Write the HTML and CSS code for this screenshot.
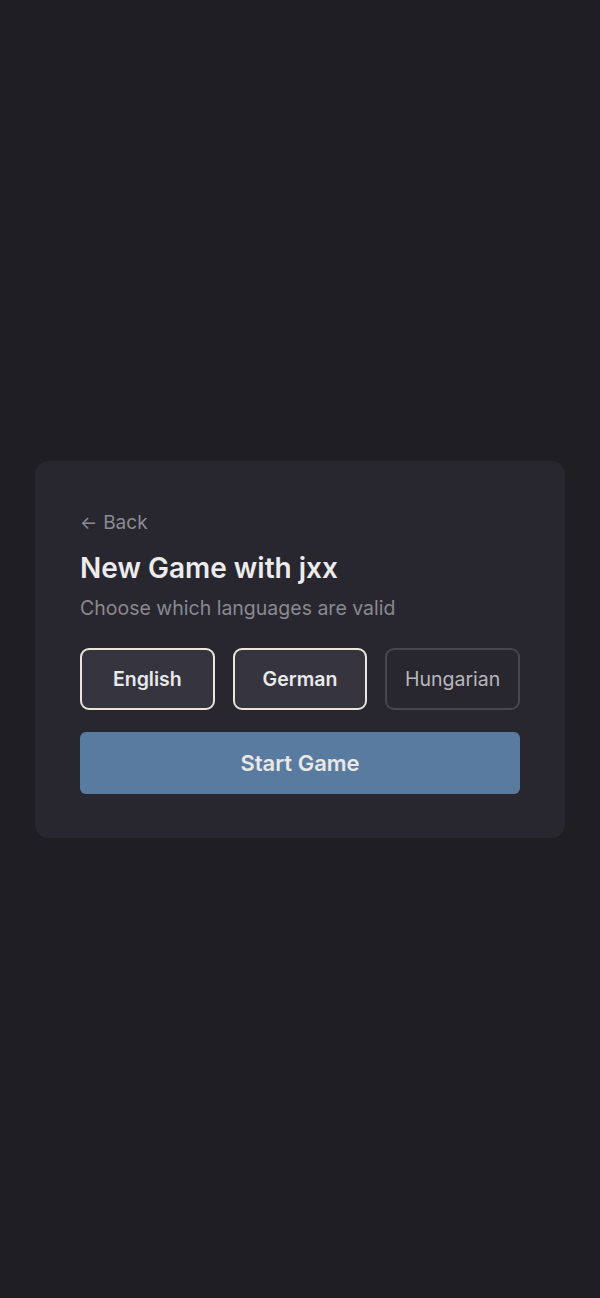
FILE: index.html
```html
<!DOCTYPE html>
<html>
<head>
<meta charset="utf-8">
<link rel="stylesheet" href="styles.css">
</head>
<body>
<div class="page">
  <div class="card">
    <a class="back"><span class="arrow">←</span> Back</a>
    <h1 class="title">New Game with jxx</h1>
    <p class="subtitle">Choose which languages are valid</p>
    <div class="langs">
      <button class="lang selected">English</button>
      <button class="lang selected">German</button>
      <button class="lang">Hungarian</button>
    </div>
    <button class="start">Start Game</button>
  </div>
</div>
</body>
</html>
```
FILE: styles.css
```css
html, body {
  margin: 0;
  padding: 0;
  background: #1f1e23;
  font-family: Inter, "Noto Sans", sans-serif;
}
.page {
  min-height: 1298px;
  display: flex;
  align-items: center;
  justify-content: center;
}
.card {
  width: 530px;
  box-sizing: border-box;
  background: #28272f;
  border-radius: 14px;
  padding: 49px 45px 44px;
  display: flex;
  flex-direction: column;
}
.back {
  color: #8c8b92;
  font-size: 19px;
  line-height: 26px;
  display: flex;
  align-items: center;
  gap: 6px;
}
.arrow {
  font-size: 18px;
}
.title {
  margin: 14px 0 0;
  color: #ececec;
  font-size: 28px;
  line-height: 36px;
  font-weight: 600;
}
.subtitle {
  margin: 9px 0 0;
  color: #8a8990;
  font-size: 19.5px;
  line-height: 26px;
}
.langs {
  margin-top: 27px;
  display: grid;
  grid-template-columns: 1fr 1fr 1fr;
  gap: 18px;
}
.lang {
  height: 62px;
  border-radius: 9px;
  font-family: inherit;
  font-size: 19.5px;
  background: transparent;
  border: 2px solid #47464d;
  color: #b8b7bc;
}
.lang.selected {
  background: #35343f;
  border-color: #ebe6d9;
  color: #e9e9ea;
  font-weight: 600;
}
.start {
  margin-top: 22px;
  height: 62px;
  border: none;
  border-radius: 6px;
  background: #5a7ba0;
  color: #e8e8e8;
  font-family: inherit;
  font-size: 22px;
  font-weight: 600;
}
```
